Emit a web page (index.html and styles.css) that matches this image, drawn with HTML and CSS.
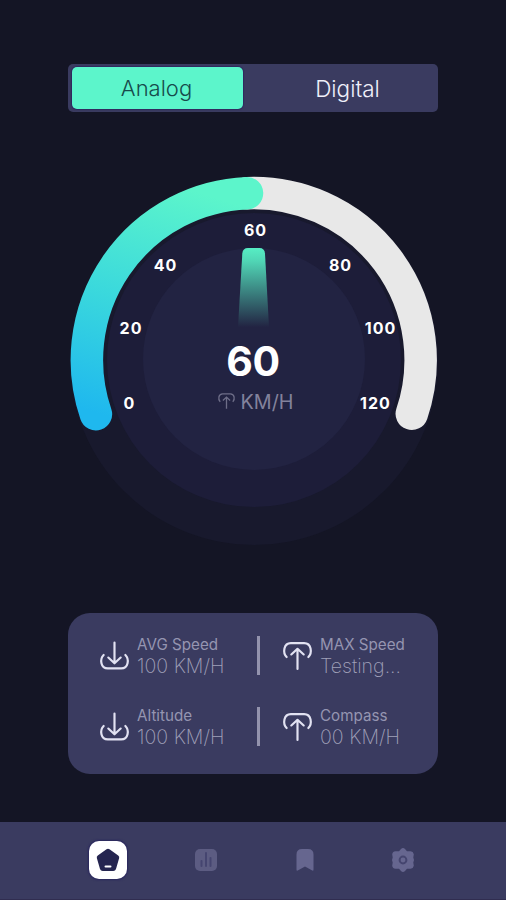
FILE: index.html
```html
<!DOCTYPE html>
<html lang="en">

<head>
    <meta charset="UTF-8">
    <meta name="viewport" content="width=device-width, initial-scale=1.0">
    <title>Speedometer</title>

    <link rel="stylesheet" href="styles.css">
</head>

<body>
<!-- shared icons -->
<svg class="sprite" width="0" height="0">
    <symbol id="icon-down" viewBox="0 0 30 30">
        <path d="M15 2.500V22M9 17L15 22.500L21 17"/>
        <path d="M4.500 14.500C0.500 18.500 1.500 27.500 8.500 27.500H21.500C28.500 27.500 29.500 18.500 25.500 14.500"/>
    </symbol>
    <symbol id="icon-up" viewBox="0 0 30 30">
        <path d="M15 28V8.500M9 14L15 8.500L21 14"/>
        <path d="M4.500 16.500C0.500 12.500 1.500 3 8.500 3H21.500C28.500 3 29.500 12.500 25.500 16.500"/>
    </symbol>
</svg>

<div class="app">
    <div class="tabs">
        <button class="tab active">Analog</button>
        <button class="tab">Digital</button>
    </div>

    <svg class="gauge" width="370" height="370" viewBox="69 176 370 370">
        <defs>
            <linearGradient id="speed" gradientUnits="userSpaceOnUse" x1="190" y1="190" x2="120" y2="420">
                <stop offset="0" stop-color="#5cf5cb"/>
                <stop offset="0.5" stop-color="#3bd9dc"/>
                <stop offset="1" stop-color="#1fb8ee"/>
            </linearGradient>
            <linearGradient id="needle" x1="0" y1="0" x2="0" y2="1">
                <stop offset="0" stop-color="#57eec4"/>
                <stop offset="0.15" stop-color="#50d5b5"/>
                <stop offset="0.9" stop-color="#50d5b5" stop-opacity="0"/>
            </linearGradient>
        </defs>
        <circle class="disc-outer" cx="254" cy="361" r="184"/>
        <circle class="disc-middle" cx="254" cy="360" r="147"/>
        <circle class="disc-inner" cx="254" cy="359" r="111"/>
        <path class="track" d="M247 193.200A167 167 0 0 1 411.800 413.700"/>
        <path class="progress" d="M95.900 414.200A167 167 0 0 1 247 193.200"/>
        <path class="needle" d="M248 248H259.500Q264.500 248 265 253.500L269.500 336H237.500L242.300 253.500Q242.800 248 248 248Z"/>
        <g class="scale">
            <text x="129.500" y="408.500">0</text>
            <text x="131" y="333.500">20</text>
            <text x="165.500" y="270.500">40</text>
            <text x="255.500" y="235.500">60</text>
            <text x="340.500" y="270.500">80</text>
            <text x="380.500" y="333.500">100</text>
            <text x="375.500" y="408.500">120</text>
        </g>
        <text class="speed" x="253" y="376">60</text>
        <use class="unit-icon" href="#icon-up" x="217.500" y="392" width="18" height="18"/>
        <text class="unit" x="240.500" y="409">KM/H</text>
    </svg>

    <div class="stats">
        <div class="row">
            <div class="stat">
                <svg class="icon"><use href="#icon-down"/></svg>
                <div class="info">
                    <p class="label">AVG Speed</p>
                    <p class="value">100 KM/H</p>
                </div>
            </div>
            <div class="divider"></div>
            <div class="stat">
                <svg class="icon"><use href="#icon-up"/></svg>
                <div class="info">
                    <p class="label">MAX Speed</p>
                    <p class="value">Testing...</p>
                </div>
            </div>
        </div>
        <div class="row">
            <div class="stat">
                <svg class="icon"><use href="#icon-down"/></svg>
                <div class="info">
                    <p class="label">Altitude</p>
                    <p class="value">100 KM/H</p>
                </div>
            </div>
            <div class="divider"></div>
            <div class="stat">
                <svg class="icon"><use href="#icon-up"/></svg>
                <div class="info">
                    <p class="label">Compass</p>
                    <p class="value">00 KM/H</p>
                </div>
            </div>
        </div>
    </div>

    <div class="nav">
        <button class="nav-item active">
            <svg width="24" height="24" viewBox="0 0 24 24">
                <path d="M10.500 1.200Q12 0.200 13.500 1.200L22.200 7.400Q23.700 8.500 23.100 10.300L20 21Q19.300 23 17.300 23H6.700Q4.700 23 4 21L0.900 10.300Q0.300 8.500 1.800 7.400Z" fill="#252550"/>
                <path d="M9.500 18.500H14.500" stroke="#fff" stroke-width="2" stroke-linecap="round"/>
            </svg>
        </button>
        <button class="nav-item">
            <svg width="24" height="24" viewBox="0 0 24 24">
                <rect x="1" y="1" width="22" height="22" rx="5" fill="#5c5c82"/>
                <path d="M7.500 13V18M12 5V18M16.500 10V18" stroke="#454570" stroke-width="2" stroke-linecap="round"/>
            </svg>
        </button>
        <button class="nav-item">
            <svg width="24" height="24" viewBox="0 0 24 24">
                <path d="M9 1H15Q20.500 1 20.500 6.500V21.500Q20.500 23.500 18.800 22.300L12 18.500L5.200 22.300Q3.500 23.500 3.500 21.500V6.500Q3.500 1 9 1Z" fill="#66668f"/>
            </svg>
        </button>
        <button class="nav-item">
            <svg width="26" height="26" viewBox="0 0 26 26">
                <path d="M11 2Q13 0 15 2L17 4.300H20.500Q23.300 4.500 23.800 7.300L23.300 10.500L24 13L23.300 15.500L23.800 18.700Q23.300 21.500 20.500 21.700H17L15 24Q13 26 11 24L9 21.700H5.500Q2.700 21.500 2.200 18.700L2.700 15.500L2 13L2.700 10.500L2.200 7.300Q2.700 4.500 5.500 4.300H9Z" fill="#66668f"/>
                <circle cx="13" cy="13" r="3.400" fill="#66668f" stroke="#45456f" stroke-width="2"/>
            </svg>
        </button>
    </div>
</div>
</body>

</html>
```
FILE: styles.css
```css
* {
    box-sizing: border-box;
}

body {
    margin: 0;
    background-color: #141525;
    font-family: Inter, "Liberation Sans", sans-serif;
}

button {
    border: none;
    padding: 0;
    background: none;
    font-family: inherit;
}

.sprite {
    display: block;
}

.app {
    display: flex;
    flex-direction: column;
    align-items: center;
    height: 900px;
    padding-top: 64px;
}

.tabs {
    display: flex;
    width: 370px;
    height: 48px;
    padding: 3px 4px;
    border-radius: 5px;
    background-color: #3a3b60;
}

.tab {
    width: 171px;
    height: 42px;
    border-radius: 5px;
    color: #f0f0fa;
    font-size: 22px;
    font-weight: 300;
}

.tab + .tab {
    flex: 1;
    padding-left: 18px;
    font-size: 22.5px;
}

.tab.active {
    background-color: #5cf5cb;
    box-shadow: 0 0 1px 1px #302860;
    color: #174b4c;
    padding-right: 2px;
}

.gauge {
    display: block;
    margin-top: 64px;
    margin-left: 2px;
}

.disc-outer {
    fill: #18192d;
}

.disc-middle {
    fill: #1d1d39;
}

.disc-inner {
    fill: #222342;
}

.track,
.progress {
    fill: none;
    stroke: #e8e8e8;
    stroke-width: 32.5;
    stroke-linecap: round;
}

.progress {
    stroke: url(#speed);
}

.needle {
    fill: url(#needle);
}

.scale {
    fill: #fff;
    font-size: 16px;
    font-weight: 700;
    letter-spacing: 1px;
    text-anchor: middle;
}

.speed {
    fill: #fff;
    font-size: 41px;
    font-weight: 700;
    letter-spacing: -0.5px;
    text-anchor: middle;
}

.unit {
    fill: #82829c;
    font-size: 19.8px;
}

.unit-icon {
    fill: none;
    stroke: #6e6e88;
    stroke-width: 2.2;
}

.stats {
    display: flex;
    flex-direction: column;
    gap: 26px;
    width: 370px;
    height: 161px;
    margin-top: 67px;
    padding: 20px 20px 0 31px;
    border-radius: 22px;
    background-color: #3a3b60;
}

.row {
    display: flex;
    align-items: center;
    height: 45px;
}

.stat {
    display: flex;
    flex-shrink: 0;
    align-items: center;
    gap: 7px;
    width: 158px;
}

.stat:last-child {
    width: auto;
}

.divider {
    width: 3px;
    height: 39px;
    margin-right: 22px;
    background-color: #9393ad;
}

.icon {
    width: 31px;
    height: 31px;
    fill: none;
    stroke: #e2e2f2;
    stroke-width: 2.1;
    stroke-linecap: round;
    stroke-linejoin: round;
}

.label,
.value {
    margin: 0;
    white-space: nowrap;
}

.label {
    color: #9595b1;
    font-size: 15.2px;
    line-height: 21px;
}

.value {
    color: #a1a1ba;
    font-size: 19.6px;
    font-weight: 200;
    line-height: 22px;
}

.nav {
    display: flex;
    align-items: center;
    justify-content: space-between;
    width: 100%;
    height: 78px;
    margin-top: auto;
    padding: 0 84px 1px 89px;
    border-bottom: 1px solid #302d50;
    background-color: #3a3b60;
}

.nav-item {
    display: flex;
    align-items: center;
    justify-content: center;
    width: 38px;
    height: 38px;
    border-radius: 10px;
}

.nav-item.active {
    background-color: #fff;
    box-shadow: 0 0 2px 1px #29265e;
}
```
